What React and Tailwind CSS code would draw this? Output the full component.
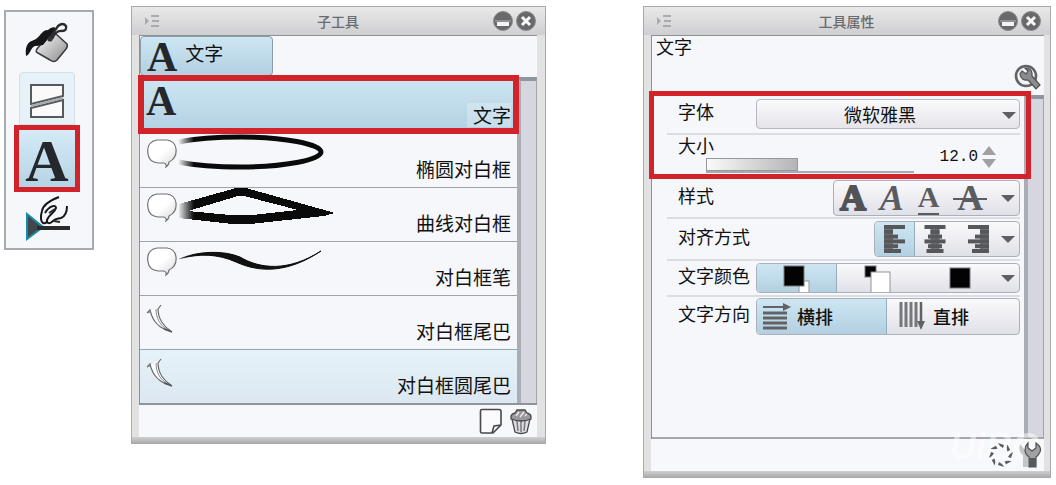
import { useState } from "react";

const FONT = "font-['Noto_Sans_CJK_SC',sans-serif]";
const SERIF = "font-['Liberation_Serif',serif]";
const ACTIVE = "bg-linear-to-b from-[#cde6f3] to-[#b3d0e1]";

const SUB_TOOLS = [
  { name: "文字", icon: "letter" },
  { name: "椭圆对白框", icon: "balloon", stroke: "ellipse" },
  { name: "曲线对白框", icon: "balloon", stroke: "curve" },
  { name: "对白框笔", icon: "balloon", stroke: "pen" },
  { name: "对白框尾巴", icon: "tail" },
  { name: "对白框圆尾巴", icon: "tail" },
];

function BucketIcon() {
  return (
    <svg width="44" height="42" viewBox="0 0 44 42" aria-hidden="true">
      <defs>
        <linearGradient id="bucket" x1="0" y1="0" x2="1" y2="1">
          <stop offset="0" stopColor="#fff" />
          <stop offset="1" stopColor="#8b8b8d" />
        </linearGradient>
      </defs>
      <path
        d="M12 27 L24 12 Q27 8 31 12 L42 22 Q43 24 41 27 L32 38 Q29 41 25 38 L13 31 Q10 30 12 27 Z"
        fill="url(#bucket)"
        stroke="#3a3a3c"
        strokeWidth="1.5"
      />
      <path
        d="M1 34 C0 25 2 20 9 18 C15 16 16 8 23 8 C26 5 30 4 31 7 L18 23 Q13 24 10 24 C6 25 5 33 1 34 Z"
        fill="#161618"
      />
      <path
        d="M24 17 L33 4 Q38 0 41 4 Q42 9 37 9 Q31 8 27 17"
        fill="none"
        stroke="#2c2c2e"
        strokeWidth="2.4"
      />
      <circle cx="25" cy="17" r="2.6" fill="#333" />
    </svg>
  );
}

function FrameIcon() {
  return (
    <svg width="36" height="36" viewBox="0 0 36 36" aria-hidden="true">
      <path d="M2 2 H34 V13 L2 21 Z M2 25 L34 17 V34 H2 Z" fill="#fafafa" stroke="#58595d" strokeWidth="2" />
      <path d="M2 23 L34 15" stroke="#a9acae" strokeWidth="2" />
    </svg>
  );
}

function OperationIcon() {
  return (
    <svg width="48" height="46" viewBox="0 0 48 46" aria-hidden="true">
      <path d="M4 18 L20 31 L4 43 Z" fill="#41474d" stroke="#168ba5" strokeWidth="2" />
      <path d="M14 32 H47" stroke="#2b2b2d" strokeWidth="4" />
      <path
        d="M36 1 C28 4 20 9 19 15 C17 21 18 26 20 27 C23 28 25 25 25 22"
        fill="none"
        stroke="#161618"
        strokeWidth="2"
      />
      <path
        d="M22 17 C26 10 33 8 33 12 C32 16 27 18 25 22 C22 27 26 29 30 25 C33 22 35 23 38 22 C43 20 44 16 44 10"
        fill="#f5f7fb"
        stroke="#161618"
        strokeWidth="2"
      />
      <path d="M26 17 L32 13 M31 25 L37 26" stroke="#29292b" strokeWidth="2" />
    </svg>
  );
}

function BalloonIcon() {
  return (
    <svg width="32" height="30" viewBox="0 0 32 30" aria-hidden="true">
      <defs>
        <linearGradient id="balloon" x1="0" y1="0" x2="1" y2="1">
          <stop offset=".5" stopColor="#fff" />
          <stop offset="1" stopColor="#d6d6d8" />
        </linearGradient>
      </defs>
      <path
        d="M11 2 H21 Q29 3 30 11 Q31 20 23 24 Q23 27 20 29 Q21 26 18 25 H12 Q3 24 2 16 Q0 4 11 2 Z"
        fill="url(#balloon)"
        stroke="#727274"
        strokeWidth="1.2"
      />
    </svg>
  );
}

function TailIcon() {
  return (
    <svg width="30" height="30" viewBox="0 0 30 30" aria-hidden="true">
      <path
        d="M1 9 L4 6 C6 15 12 25 25 27 C18 23 12 15 12 5 L15 1"
        fill="#fdfdfd"
        stroke="#6a6b6e"
        strokeWidth="1.2"
      />
      <path d="M10 5 C10 14 14 22 22 26 M1 9 L4 8" stroke="#89898c" fill="none" />
      <path d="M18 25 L26 28" stroke="#55565a" strokeWidth="1.5" />
    </svg>
  );
}

function StrokePreview({ type }) {
  return (
    <svg width="160" height="42" viewBox="0 0 160 42" aria-hidden="true">
      <defs>
        <linearGradient id="fade" gradientUnits="userSpaceOnUse" x1="0" y1="0" x2="16" y2="0">
          <stop offset="0" stopColor="#000" stopOpacity="0" />
          <stop offset="1" stopColor="#0a0a0a" />
        </linearGradient>
      </defs>
      {type === "ellipse" && (
        <path
          d="M1 8 C20 4 45 3 63 3 C105 3 143 10 143 18 C143 26 105 33 63 33 C45 33 20 32 1 28"
          fill="none"
          stroke="url(#fade)"
          strokeWidth="5"
        />
      )}
      {type === "curve" && (
        <path
          d="M1 16 L58 0 H68 L157 25 L146 28 L72 36 H54 L1 30 Z M10 23 L60 8 H66 L120 22 L74 27 H52 Z"
          fill="url(#fade)"
          fillRule="evenodd"
          shapeRendering="crispEdges"
        />
      )}
      {type === "pen" && (
        <path
          d="M1 17 C20 9 45 8 62 15 C82 27 110 30 143 9 C110 31 82 31 58 20 C40 12 22 11 1 17 Z"
          fill="#111"
          stroke="url(#fade)"
          strokeWidth="1"
        />
      )}
    </svg>
  );
}

function MenuIcon() {
  return (
    <svg width="16" height="14" viewBox="0 0 16 14" aria-hidden="true">
      <path d="M1 3 L5 7 L1 11 Z M7 1 H15 V3 H7 Z M8 6 H15 V8 H8 Z M7 11 H15 V13 H7 Z" fill="#aaaaac" />
    </svg>
  );
}

function RoundButton({ label, children }) {
  return (
    <button aria-label={label}>
      <svg width="22" height="22" viewBox="0 0 22 22" aria-hidden="true">
        <circle cx="11" cy="11" r="9.5" fill="#69696b" stroke="#8d8d8f" strokeWidth="1" />
        {children}
      </svg>
    </button>
  );
}

function Arrow() {
  return (
    <svg width="14" height="8" viewBox="0 0 14 8" aria-hidden="true">
      <path d="M0 1 H14 L7 8 Z" fill="#5f6063" />
    </svg>
  );
}

function Letter({ className = "" }) {
  return (
    <span className={`${SERIF} font-bold text-[#24282c] ${className}`}>
      A
    </span>
  );
}

function Panel({ title, className, bodyClassName, children, footer }) {
  return (
    <section
      className={`mt-1.5 flex flex-col border border-[#a9a9ab] bg-[#e2e2e3] pl-[7px] ${className}`}
    >
      <header className="-ml-[7px] flex h-7 items-center justify-between bg-linear-to-b from-[#e9e9ea] to-[#cfcfd1] pl-3 pr-2">
        <button aria-label="菜单">
          <MenuIcon />
        </button>
        <h2 className="ml-6 text-sm font-medium leading-5 text-[#6a6b6e]">{title}</h2>
        <div className="flex gap-px">
          <RoundButton label="最小化">
            <path d="M3 11 H19" stroke="#b8b8ba" />
            <rect x="5" y="12" width="12" height="4" fill="#f4f4f5" />
          </RoundButton>
          <RoundButton label="关闭">
            <path d="M7 7 L15 15 M15 7 L7 15" stroke="#f8f8f8" strokeWidth="3" />
          </RoundButton>
        </div>
      </header>
      <div className={`border-l border-t border-[#8f9094] bg-[#f5f7fb] ${bodyClassName}`}>
        {children}
      </div>
      <footer className={`flex h-8 items-center justify-end bg-[#f6f8fc] ${bodyClassName}`}>
        {footer}
      </footer>
      <div className="-ml-[7px] h-1.5 bg-linear-to-b from-[#cfcfd0] to-[#adadaf]" />
    </section>
  );
}

function Scrollbar() {
  return (
    <div className="w-5 shrink-0 border-l-4 border-r border-t-4 border-l-[#a9adb6] border-r-[#a3a4aa] border-t-[#8f959e] bg-[#d5d6de]" />
  );
}

function ToolBox() {
  return (
    <nav className="mt-2.5 flex h-60 w-[90px] shrink-0 flex-col items-center border-2 border-[#a7abaf] bg-[#f5f7fb] pr-1 pt-2.5">
      <button aria-label="填充" className="flex h-[50px] items-start justify-center">
        <BucketIcon />
      </button>
      <button
        aria-label="分镜"
        className="flex h-[53px] w-[56px] items-center justify-center rounded-t border border-[#d0dfe8] bg-[#e7f1f8] pt-1"
      >
        <FrameIcon />
      </button>
      <button
        aria-label="文字"
        className="flex h-[67px] w-[66px] items-center justify-center border-[5px] border-[#d2232a] bg-linear-to-b from-[#d5ebf7] to-[#b5d3e3] pt-1"
      >
        <Letter className="text-6xl leading-14" />
      </button>
      <button aria-label="操作" className="mt-1">
        <OperationIcon />
      </button>
    </nav>
  );
}

function SubToolPanel() {
  const [selected, setSelected] = useState("文字");

  return (
    <Panel
      title="子工具"
      className="ml-[37px] min-w-0 flex-[415]"
      bodyClassName="mr-2"
      footer={
        <div className="flex gap-1.5 pr-1">
          <button aria-label="新建">
            <svg width="24" height="27" viewBox="0 0 24 27" aria-hidden="true">
              <path
                d="M3 1.5 H20 Q22 1.5 22 3.5 V17 L14 25 H3 Q1.5 25 1.5 23 V3 Q1.5 1.5 3 1.5 Z M22 17 L15 18 L13 25"
                fill="#fbfbfd"
                stroke="#47484b"
                strokeWidth="1.6"
              />
            </svg>
          </button>
          <button aria-label="删除">
            <svg width="24" height="27" viewBox="0 0 24 27" aria-hidden="true">
              <path d="M3 11 H21 L18 24 Q12 27 6 24 Z" fill="#dededf" stroke="#47484b" strokeWidth="1.3" />
              <path d="M8 13 L9 23 M12 13 V24 M16 13 L15 23" stroke="#77787a" strokeWidth="1.5" />
              <path d="M2 9 Q2 6 6 5 L8 2 H16 L18 5 Q22 6 22 9 V11 Q12 15 2 11 Z" fill="#99999b" stroke="#47484b" strokeWidth="1.3" />
              <path d="M7 8 L10 4 M11 9 L15 4 M16 8 L18 6" stroke="#eee" strokeWidth="1.3" />
            </svg>
          </button>
        </div>
      }
    >
      <div className="h-[41px]">
        <button
          className={`flex h-10 w-[133px] items-start gap-2 rounded-sm border border-[#8e9ca6] pl-1.5 ${ACTIVE}`}
        >
          <Letter className="text-[42px] leading-10" />
          <span className="pt-1 text-[19px] leading-6">文字</span>
        </button>
      </div>
      <div className="flex border-b-2 border-[#8f9499]">
        <ul className="min-w-0 flex-1">
          {SUB_TOOLS.map(({ name, icon, stroke }, index) => (
            <li
              key={name}
              className={`relative ${index ? "border-t border-[#9da4ab]" : ""}`}
            >
              <button
                onClick={() => setSelected(name)}
                className={`flex w-full items-start pl-1.5 pr-1.5 ${
                  index ? "h-[53px]" : "h-[56px]"
                } ${
                  selected === name
                    ? ACTIVE
                    : index === SUB_TOOLS.length - 1
                    ? "bg-linear-to-b from-[#e6f2f9] to-[#dce7f1]"
                    : ""
                }`}
              >
                {icon === "letter" && <Letter className="pt-1 text-[42px] leading-10" />}
                {icon === "balloon" && (
                  <span className="pt-1">
                    <BalloonIcon />
                  </span>
                )}
                {icon === "tail" && (
                  <span className="pt-2">
                    <TailIcon />
                  </span>
                )}
                {stroke && <StrokePreview type={stroke} />}
                <span
                  className={`mb-1.5 ml-auto self-end whitespace-nowrap text-[19px] leading-6 ${
                    selected === name ? "bg-white/25 pl-1.5" : ""
                  }`}
                >
                  {name}
                </span>
              </button>
              {index === 0 && (
                <div className="pointer-events-none absolute -inset-x-0.5 -bottom-px -top-0.5 z-10 border-[6px] border-[#d2232a]" />
              )}
            </li>
          ))}
        </ul>
        <Scrollbar />
      </div>
    </Panel>
  );
}

function Row({ label, className, children, htmlFor }) {
  return (
    <div
      className={`flex items-center justify-between gap-1 border-b-2 border-[#d9dee4] pl-[11px] ${className}`}
    >
      {htmlFor ? (
        <label htmlFor={htmlFor} className="pb-1.5 text-lg leading-6 whitespace-nowrap">
          {label}
        </label>
      ) : (
        <span className="pb-1.5 text-lg leading-6 whitespace-nowrap">{label}</span>
      )}
      {children}
    </div>
  );
}

const GROUP =
  "flex items-stretch rounded border border-[#adb0ba] bg-linear-to-b from-[#fafafc] to-[#e0e0e8]";

const BAR_WIDTHS = [21, 9, 14, 21, 14, 17];

function Bars({ align }) {
  // share of the free space that stays left of each bar
  const shift = { left: 0, center: 0.5, right: 1 }[align];
  return (
    <svg width="22" height="28" viewBox="0 0 22 28" aria-hidden="true">
      <rect x={13 * shift} width="9" height="28" fill="#77787b" />
      {BAR_WIDTHS.map((width, i) => (
        <rect
          key={i}
          x={(22 - width) * shift}
          y={i * 4.8}
          width={width}
          height="4"
          fill="#56575a"
        />
      ))}
    </svg>
  );
}

function ToolPropertyPanel() {
  const [size, setSize] = useState("12.0");
  const [direction, setDirection] = useState("横排");

  return (
    <Panel
      title="工具属性"
      className="ml-[97px] min-w-0 flex-[408]"
      bodyClassName="mr-1.5"
      footer={
        <div className="relative flex items-center gap-1 pr-0.5">
          <span className="pointer-events-none absolute -top-3 right-1 font-['Liberation_Sans',sans-serif] text-4xl font-bold italic leading-9 text-white/50">
            UiBQ
          </span>
          <button aria-label="初始设置" className="relative">
            <svg width="26" height="28" viewBox="0 0 26 28" aria-hidden="true">
              <g fill="#5b5c5f">
                {[0, 45, 90, 135, 180, 225, 270, 315].map((angle) => (
                  <path key={angle} d="M10 2 L16 4 L15 7 L12 5 Z" transform={`rotate(${angle} 13 14)`} />
                ))}
              </g>
            </svg>
          </button>
          <button aria-label="子工具详细" className="relative">
            <svg width="24" height="28" viewBox="0 0 24 28" aria-hidden="true">
              <path d="M2 3 Q0 11 5 14 V26 H10 V13" fill="#c5c5c7" />
              <path d="M10 2 V7 L14 10 L18 7 V2 Q24 6 22 11 Q20 15 18 16 V26 H11 V16 Q7 13 7 9 Q7 5 10 2 Z" fill="#a2a2a4" stroke="#4c4d50" strokeWidth="1.2" />
              <rect x="11" y="17" width="7" height="9" fill="#58595c" />
            </svg>
          </button>
        </div>
      }
    >
      <div className="flex h-[59px] items-start justify-between pl-1 pr-0.5">
        <h3 className="text-lg leading-5">文字</h3>
        <button aria-label="设置" className="self-end pb-1">
          <svg width="28" height="27" viewBox="0 0 28 27" aria-hidden="true">
            <circle cx="12" cy="12" r="10" fill="#f4f4f5" stroke="#626366" strokeWidth="2.6" />
            <path d="M8 7 L12 10 L14 7 L11 4 Q17 4 18 9 V12 L26 21 L22 25 L14 16 Q7 17 6 10 Z" fill="#8b8c8f" stroke="#4e4f52" strokeWidth="1.2" />
          </svg>
        </button>
      </div>
      <div className="flex h-[344px] border-b-2 border-[#a4a6ae]">
        <div className="min-w-0 flex-1 pl-[15px] pr-1">
          <div className="relative">
            <Row label="字体" htmlFor="font" className="h-10">
              <div className="relative">
                <select
                  id="font"
                  className="h-[30px] w-[264px] appearance-none rounded border border-[#b4b7c0] bg-linear-to-b from-[#fafafc] to-[#e4e4ea] pr-4 text-center text-lg leading-6"
                >
                  <option>微软雅黑</option>
                </select>
                <span className="pointer-events-none absolute right-1 top-3">
                  <Arrow />
                </span>
              </div>
            </Row>
            <div className="flex h-11 items-start pl-[11px]">
              <label htmlFor="size" className="w-7 whitespace-nowrap text-lg leading-5">
                大小
              </label>
              <div className="relative mb-1.5 h-[15px] w-[208px] self-end border-b-2 border-[#a9aab0]">
                <div
                  className="h-full border border-[#97989b] bg-linear-to-r from-[#fafafa] to-[#b5b5b7]"
                  style={{ width: `${(Number(size) / 27) * 100}%` }}
                />
                <input
                  type="range"
                  aria-label="大小"
                  min="1"
                  max="27"
                  value={Number(size) || 1}
                  onChange={(e) => setSize(Number(e.target.value).toFixed(1))}
                  className="absolute inset-0 w-full opacity-0"
                />
              </div>
              <div className="ml-auto flex items-center gap-1 self-center pr-6">
                <input
                  id="size"
                  value={size}
                  onChange={(e) => setSize(e.target.value)}
                  className="w-10 bg-transparent text-right font-['Liberation_Mono',monospace] text-base leading-6"
                />
                <div className="flex flex-col gap-1">
                  <button aria-label="增大" onClick={() => setSize((Number(size) + 1).toFixed(1))}>
                    <svg width="14" height="9" viewBox="0 0 14 9" aria-hidden="true">
                      <path d="M7 0 L14 9 H0 Z" fill="#a0a0a3" />
                    </svg>
                  </button>
                  <button aria-label="减小" onClick={() => setSize((Number(size) - 1).toFixed(1))}>
                    <svg width="14" height="9" viewBox="0 0 14 9" aria-hidden="true">
                      <path d="M0 0 H14 L7 9 Z" fill="#a0a0a3" />
                    </svg>
                  </button>
                </div>
              </div>
            </div>
            <div className="pointer-events-none absolute -left-[18px] -right-[11px] -top-1 bottom-0 z-10 border-[5px] border-[#d2232a]" />
          </div>

          <Row label="样式" className="h-10">
            <div className={`h-9 w-[187px] items-center justify-between pl-1.5 pr-1 ${GROUP}`}>
              <button aria-label="粗体" className={`${SERIF} text-4xl font-bold leading-8 text-[#525356] [-webkit-text-stroke:2px_#525356]`}>
                A
              </button>
              <button aria-label="斜体" className={`${SERIF} text-4xl font-bold italic leading-8 text-[#5b5c5f]`}>
                A
              </button>
              <button aria-label="下划线" className={`${SERIF} border-b-2 border-[#5b5c5f] text-3xl font-bold leading-7 text-[#5b5c5f]`}>
                A
              </button>
              <button aria-label="删除线" className={`${SERIF} relative px-1 text-4xl font-bold leading-8 text-[#5b5c5f]`}>
                A
                <span className="absolute inset-x-0 top-1/2 h-0.5 bg-[#5b5c5f]" />
              </button>
              <button aria-label="更多样式">
                <Arrow />
              </button>
            </div>
          </Row>

          <Row label="对齐方式" className="h-[42px]">
            <div className={`h-9 w-[146px] ${GROUP}`}>
              <button aria-label="左对齐" className={`flex w-10 items-center justify-center rounded-l border-r border-[#96aebb] ${ACTIVE}`}>
                <Bars align="left" />
              </button>
              <button aria-label="居中对齐" className="flex w-10 items-center justify-center">
                <Bars align="center" />
              </button>
              <button aria-label="右对齐" className="flex flex-1 items-center justify-center">
                <Bars align="right" />
              </button>
              <button aria-label="更多对齐" className="mr-1 flex items-center">
                <Arrow />
              </button>
            </div>
          </Row>

          <Row label="文字颜色" className="h-9">
            <div className={`h-[30px] w-[264px] ${GROUP}`}>
              <button aria-label="主颜色" className={`flex w-20 items-center justify-center rounded-l border-r border-[#96aebb] ${ACTIVE}`}>
                <svg width="28" height="28" viewBox="0 0 28 28" aria-hidden="true">
                  <rect x="16" y="17" width="10" height="12" fill="#fff" stroke="#929497" />
                  <rect x="1" y="2" width="20" height="20" fill="#030303" stroke="#77797b" />
                </svg>
              </button>
              <button aria-label="副颜色" className="flex flex-1 items-center justify-center">
                <svg width="28" height="28" viewBox="0 0 28 28" aria-hidden="true">
                  <rect x="1" y="2" width="11" height="11" fill="#030303" stroke="#77797b" />
                  <rect x="7" y="8" width="19" height="21" fill="#fff" stroke="#929497" />
                </svg>
              </button>
              <button aria-label="自定义颜色" className="flex flex-1 items-center justify-center">
                <svg width="22" height="22" viewBox="0 0 22 22" aria-hidden="true">
                  <rect x="1" y="1" width="20" height="20" fill="#030303" stroke="#77797b" />
                </svg>
              </button>
              <button aria-label="更多颜色" className="mr-1 flex items-center">
                <Arrow />
              </button>
            </div>
          </Row>

          <Row label="文字方向" className="h-10 border-transparent">
            <div className={`h-[37px] w-[264px] ${GROUP}`}>
              <button
                onClick={() => setDirection("横排")}
                className={`flex w-[130px] items-center gap-1.5 rounded-l border-r border-[#96aebb] pl-1.5 text-lg font-medium leading-6 ${
                  direction === "横排" ? ACTIVE : ""
                }`}
              >
                <svg width="28" height="27" viewBox="0 0 28 27" aria-hidden="true">
                  <path d="M0 4 H21" stroke="#606266" strokeWidth="2" />
                  <path d="M20 0 L28 4 L20 8 Z" fill="#606266" />
                  <path d="M0 10 H24 M0 15 H24 M0 20 H24 M0 25 H24" stroke="#606266" strokeWidth="3" />
                </svg>
                横排
              </button>
              <button
                onClick={() => setDirection("直排")}
                className={`flex flex-1 items-center gap-2 pl-3 text-lg font-medium leading-6 ${
                  direction === "直排" ? ACTIVE : ""
                }`}
              >
                <svg width="26" height="28" viewBox="0 0 26 28" aria-hidden="true">
                  <path d="M2 0 V25 M7 0 V25 M12 0 V25 M17 0 V25" stroke="#77787b" strokeWidth="3" />
                  <path d="M22 0 V21" stroke="#606266" strokeWidth="2.5" />
                  <path d="M18 19 H26 L22 28 Z" fill="#606266" />
                </svg>
                直排
              </button>
            </div>
          </Row>
        </div>
        <Scrollbar />
      </div>
    </Panel>
  );
}

export default function App() {
  return (
    <main className={`flex min-h-screen items-start bg-white pl-1 pr-[5px] text-[#111] ${FONT}`}>
      <ToolBox />
      <SubToolPanel />
      <ToolPropertyPanel />
    </main>
  );
}
